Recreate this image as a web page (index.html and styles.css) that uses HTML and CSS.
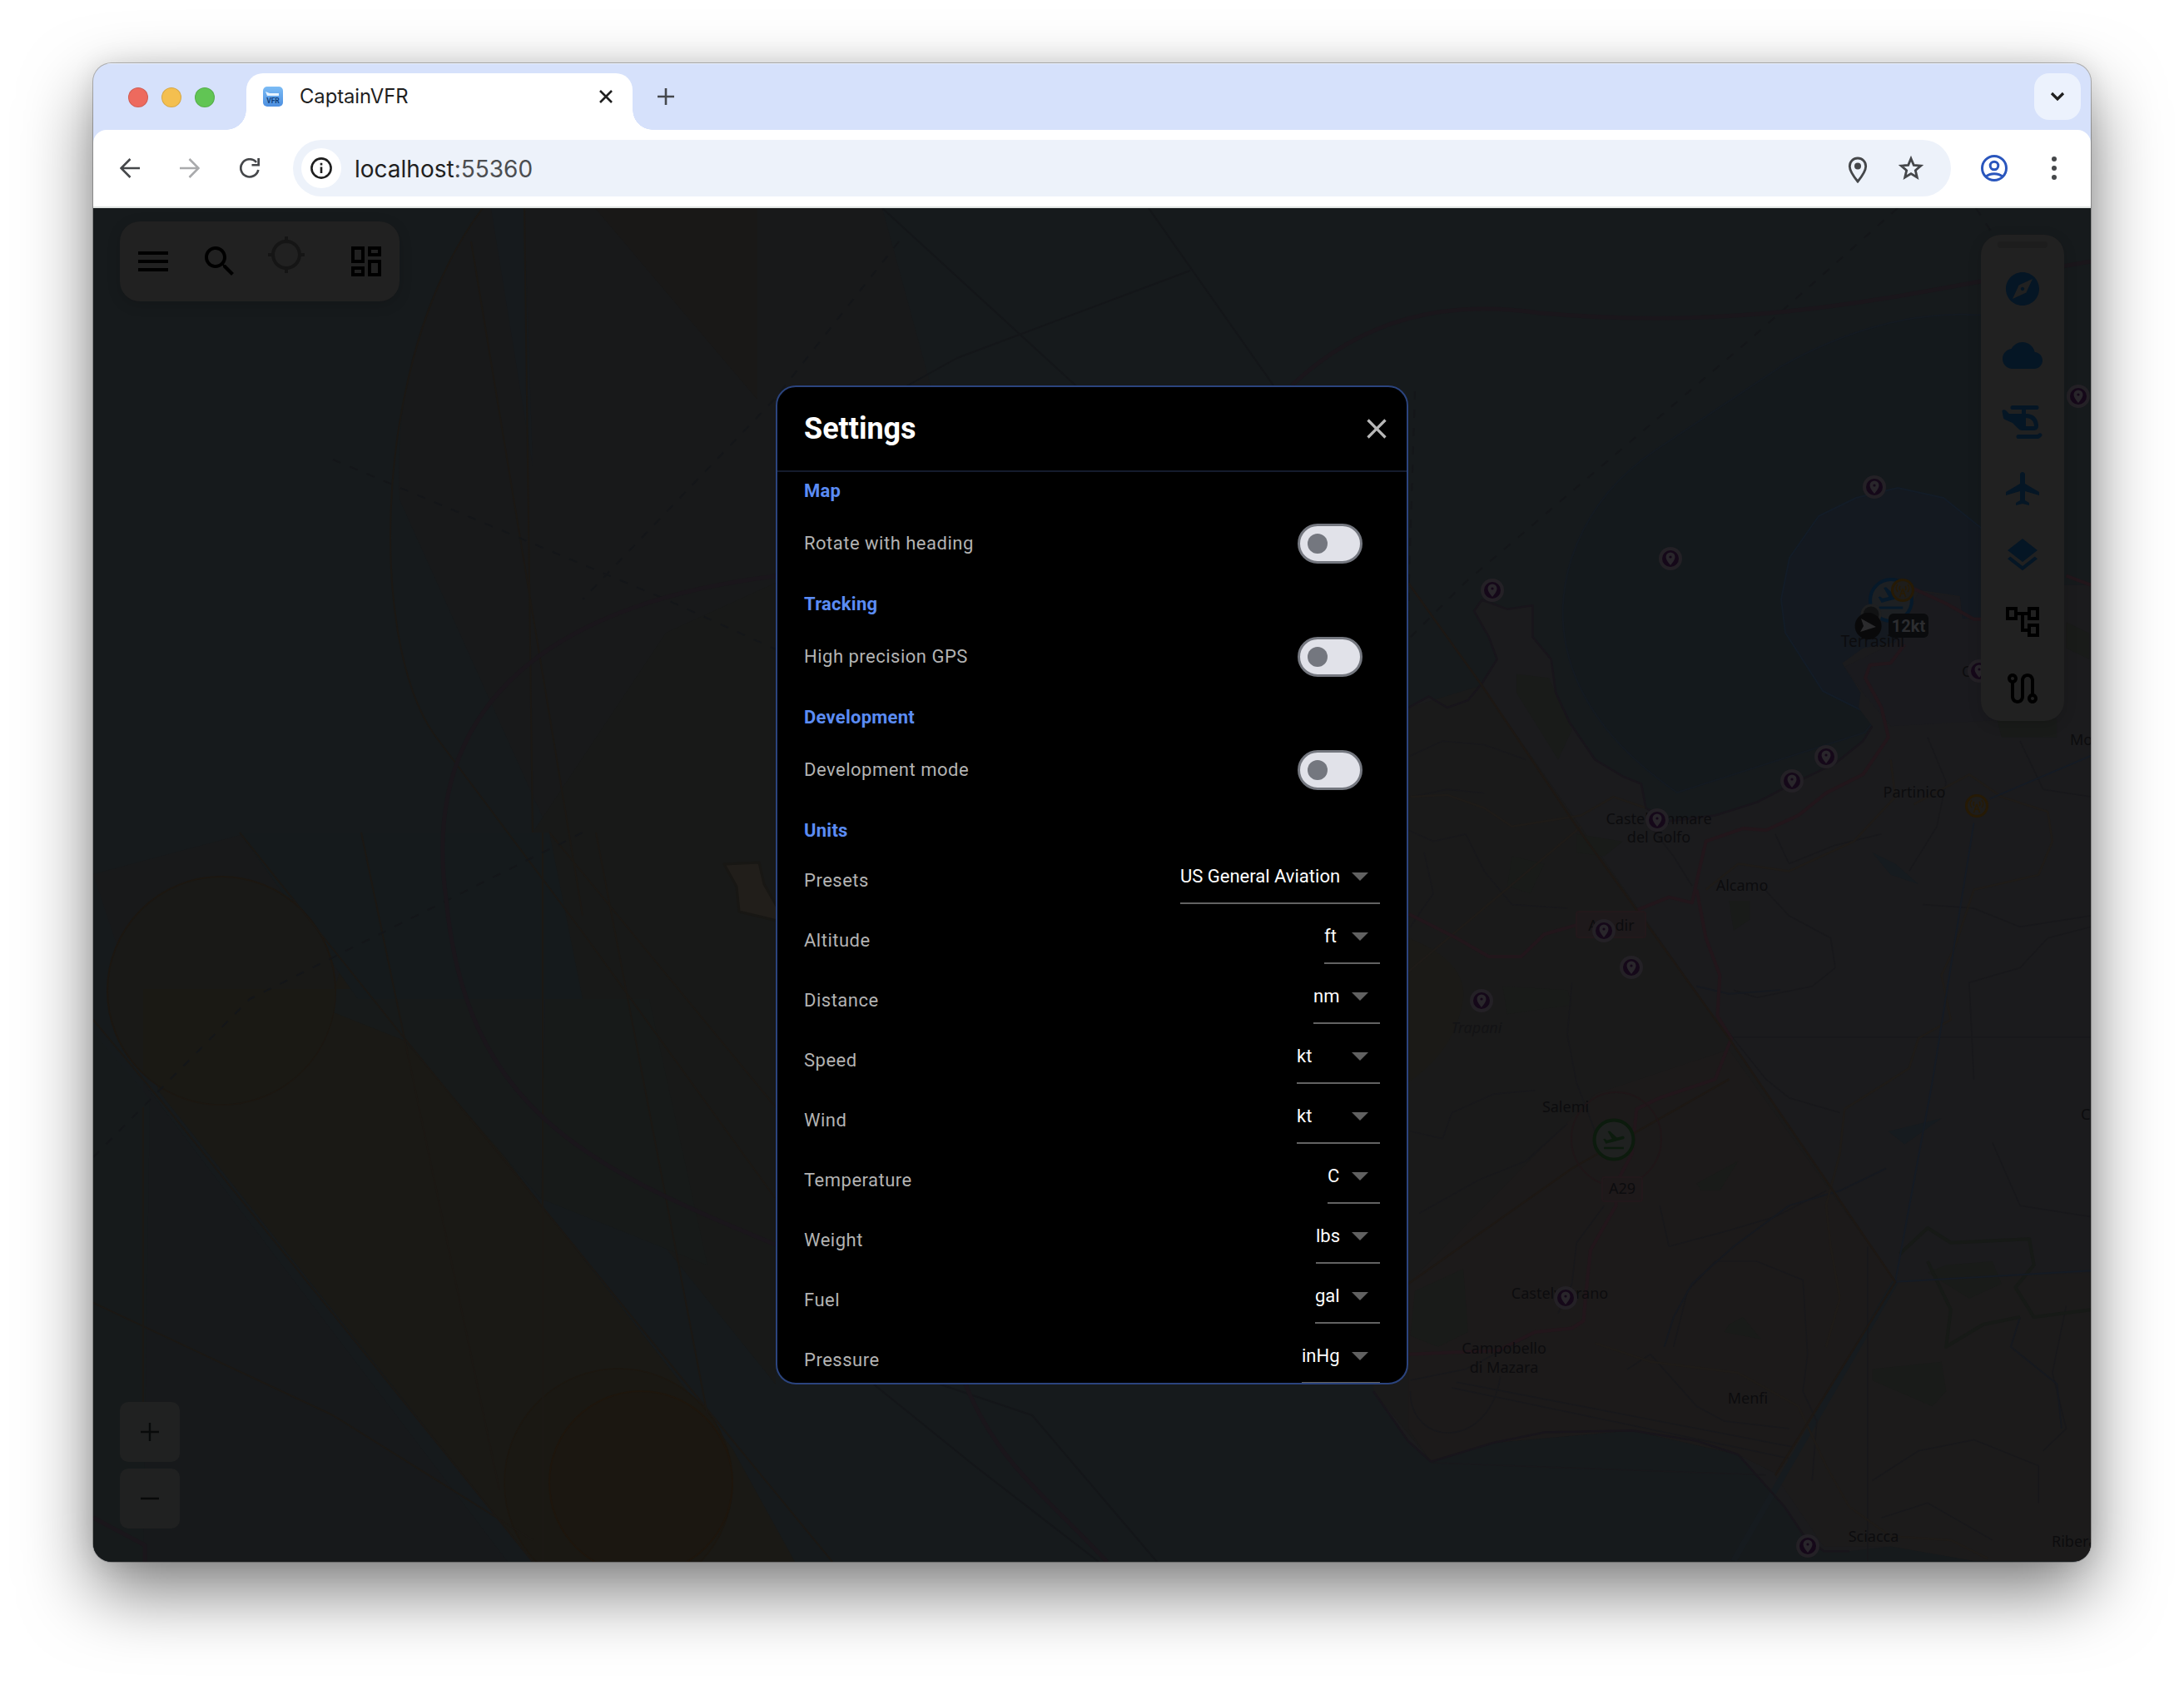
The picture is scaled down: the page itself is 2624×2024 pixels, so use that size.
FILE: index.html
```html
<!DOCTYPE html>
<html lang="en">
<head>
<meta charset="utf-8">
<title>CaptainVFR</title>
<link rel="stylesheet" href="styles.css">
</head>
<body>
<svg class="defs" aria-hidden="true">
  <defs>
    <g id="pin">
      <circle r="14" fill="#242126"/><circle r="10" fill="#150819"/>
      <path d="M0 8C-3.500 3.500-5.500 1-5.500-2a5.500 5.500 0 0 1 11 0C5.500 1 3.500 3.500 0 8z" fill="#29262b"/><circle cy="-2" r="1.600" fill="#150819"/>
    </g>
    <g id="navaid">
      <circle r="12.500" fill="#1e1d1b" stroke="#261a05" stroke-width="3"/>
      <path d="M0-2L-3.500 8M0-2L3.500 8M-2 4H2M-3-5a4 4 0 0 0 0 5M3-5a4 4 0 0 1 0 5M-6-7a7 7 0 0 0 0 9M6-7a7 7 0 0 1 0 9" fill="none" stroke="#281b04" stroke-width="1.400"/>
    </g>
    <path id="takeoff" d="M2.500 19h19v2h-19zm19.570-9.360c-.21-.8-1.040-1.280-1.840-1.060L14.920 10l-6.900-6.430-1.930.51 4.140 7.170-4.970 1.330-1.970-1.540-1.450.39 2.590 4.490s7.120-1.900 16.570-4.430c.81-.23 1.280-1.050 1.070-1.850z"/>
  </defs>
</svg>
<div class="window">
  <div class="tabstrip">
    <div class="lights"><i class="red"></i><i class="amber"></i><i class="green"></i></div>
    <div class="tab">
      <svg class="favicon" viewBox="0 0 24 24"><defs><linearGradient id="fav" x1="0" y1="0" x2="0" y2="1"><stop offset="0" stop-color="#7cbcf5"/><stop offset="1" stop-color="#4d8fe0"/></linearGradient></defs><rect width="24" height="24" rx="5" fill="url(#fav)"/><path d="M3 6l5 2h11v3H5z" fill="#e9f4ff"/><text x="12" y="20" text-anchor="middle" class="favicon-text">VFR</text></svg>
      <span class="tab-title">CaptainVFR</span>
      <svg class="tab-close" viewBox="0 0 16 16"><path d="M1 1L15 15M15 1L1 15" stroke="#1f1f1f" stroke-width="2.600"/></svg>
    </div>
    <svg class="new-tab" viewBox="0 0 20 20"><path d="M10 0V20M0 10H20" stroke="#45484d" stroke-width="2.600"/></svg>
    <div class="tab-search"><svg width="18" height="12" viewBox="0 0 18 12"><path d="M2 2L9 9L16 2" fill="none" stroke="#1f1f1f" stroke-width="3.200"/></svg></div>
  </div>
  <div class="toolbar">
    <svg class="nav" viewBox="0 0 24 24"><path d="M24 12H2M12.500 1L1.500 12L12.500 23" fill="none" stroke="#45474a" stroke-width="2.600"/></svg>
    <svg class="nav" viewBox="0 0 24 24"><path d="M0 12H22M11.500 1L22.500 12L11.500 23" fill="none" stroke="#a9aaac" stroke-width="2.600"/></svg>
    <svg class="nav" viewBox="0 0 24 24"><path d="M22.300 14A10.600 10.600 0 1 1 20 5" fill="none" stroke="#45474a" stroke-width="2.700"/><path d="M24 0V9.500H14.500V7H21.300V0z" fill="#45474a"/></svg>
    <div class="omnibox">
      <div class="site-info"><svg width="26" height="26" viewBox="0 0 26 26"><circle cx="13" cy="13" r="11.600" fill="none" stroke="#1f1f1f" stroke-width="2.600"/><path d="M13 11.500V19M13 6.800V9.400" stroke="#1f1f1f" stroke-width="2.600"/></svg></div>
      <div class="url">localhost<span>:55360</span></div>
      <svg class="omni-icon" viewBox="0 0 32 32"><path d="M16 30C9.500 22 6.300 17 6.300 11.700a9.700 9.700 0 0 1 19.400 0C25.700 17 22.500 22 16 30z" fill="none" stroke="#45474a" stroke-width="2.800"/><circle cx="16" cy="11.500" r="4" fill="#45474a"/></svg>
      <svg class="omni-icon star" viewBox="0 0 32 32"><path d="M16 4.500L19.300 12.400L27.800 13.100L21.300 18.700L23.300 27L16 22.600L8.700 27L10.700 18.700L4.200 13.100L12.700 12.400Z" fill="none" stroke="#45474a" stroke-width="2.800"/></svg>
    </div>
    <svg class="profile" viewBox="0 0 32 32"><g fill="none" stroke="#2a56bd" stroke-width="3"><circle cx="16" cy="16" r="14.500"/><circle cx="16" cy="13" r="4.800"/><path d="M6 26.200C11 21.500 21 21.500 26 26.200"/></g></svg>
    <div class="kebab"><i></i><i></i><i></i></div>
  </div>
  <div class="viewport">
    <svg class="map" viewBox="112 250 2400 1626">
      <rect x="112" y="250" width="2400" height="1626" fill="#161a1c"/>
      <!-- western airspaces -->
      <path d="M360 250H1060L1120 470V1663L870 1320L660 1000L480 600Q470 400 580 250z" fill="#18191a"/>
      <path d="M715 250H910V480z" fill="#191817"/>
      <path d="M590 250H630L640 560z" fill="#161a1d"/>
      <path d="M640 1000L800 760L932 700V1663L720 1400z" fill="#181918"/>
      <path d="M112 1050L300 1000L440 1190L390 1300L760 1800L700 1876H650L172 1230z" fill="#18191a"/>
      <path d="M172 1188H402L416 1140L660 1460L880 1740L955 1876H640L190 1310z" fill="#1a1915"/>
      <path d="M330 1188H650V1440L486 1250z" fill="#171a1a"/>
      <path d="M172 1300L610 1876H172z" fill="#17191b"/>
      <path d="M288 1000H660L700 1200H430z" fill="#151a1c"/>
      <path d="M655 1200H780L850 1520L650 1440z" fill="#171a19"/>
      <path d="M112 1240L180 1320L172 1876H112z" fill="#161a1b"/>
      <circle cx="266" cy="1190" r="137" fill="#191917" stroke="#1c1711" stroke-width="2"/>
      <path d="M172 1188H403A137 137 0 0 1 172 1289z" fill="#1a1914"/>
      <circle cx="743" cy="1781" r="137" fill="#1a1813" stroke="#1c1710" stroke-width="1.500"/>
      <circle cx="770" cy="1781" r="110" fill="#1b1711" stroke="#1e160d" stroke-width="2"/>
      <g fill="none" stroke="#1b1814" stroke-width="2">
        <path d="M288 1000L480 1240L660 1460L880 1730L1000 1876M112 1225L200 1330L640 1876M172 1330V1690M112 1565L400 1700L640 1850"/>
        <path d="M434 1000L600 1790M580 250C450 420 440 760 520 880L700 1120L932 1440M716 1000L850 1700M660 1000L932 1330M652 1000V1876M630 250L640 1000M566 290L700 1100"/>
      </g>
      <g fill="none" stroke="#141619" stroke-width="2">
        <path d="M1060 250L1300 470M1380 250L1530 463M1430 325L1150 430L1060 480"/>
        <path d="M400 552L800 720L932 780M1080 290L930 480L700 720M112 1390L300 1200L700 1000M2280 250L2100 410L1760 700L1690 770M2374 250L2400 290M2100 500L2280 540L2400 575M1700 470L1690 790" stroke-dasharray="10 12"/>
        <path d="M1050 1663L1170 1760L1320 1876M1130 1663L1240 1700L1390 1876"/>
      </g>
      <path d="M932 692C700 720 500 820 536 1080C560 1330 700 1400 932 1495M1160 1663C1200 1760 1260 1800 1330 1876M1552 463C1640 380 1740 360 1850 376C2120 400 2300 350 2512 314M112 1823L174 1856V1876" fill="none" stroke="#1a161b" stroke-width="5"/>
      <path d="M870 1038L912 1036L918 1062L934 1090V1106L888 1095L885 1065z" fill="#211e1a" stroke="#181714" stroke-width="3"/>
      <!-- terminal zones -->
      <path d="M1990 540C1900 600 1860 700 1885 790Q1910 880 2015 952L2240 880L2450 640V390Q2300 350 2140 440z" fill="#14191c" stroke="#141a21" stroke-width="2"/>
      <path d="M2280 586L2335 598L2400 650V860H2250L2190 830L2145 760L2140 720L2150 670L2185 620L2230 598z" fill="#141920" stroke="#131c27" stroke-width="2"/>
      <g transform="translate(1650 600) scale(.555 .4464)">
        <path class="land" d="M0 600L76 560L120 530L160 560L205 540L235 495L268 430L250 370L218 300L235 270L290 295L345 285L345 370L385 430L395 520L425 600L480 700L540 745L580 765L590 830L640 865L740 850L830 815L900 770L1000 710L1060 650L1080 610L1050 560L1055 520L1015 440L1060 400L1130 385L1170 330L1165 240L1270 260L1275 320L1400 330L1450 230L1553 230V2856H1300L1250 2830L1120 2817L1030 2830H975L930 2784L890 2710L830 2626L790 2570L700 2533L560 2505L370 2510L260 2538L125 2589L75 2533L0 2399z"/>
        <path d="M1180 250L1270 262L1275 320L1400 330V590L1120 610L1060 520L1020 450L1130 385z" fill="#1a1a1e"/>
        <path d="M76 560L235 500L770 1450L1130 2105L870 2620L790 2570L560 2505L260 2538L125 2589L0 2399z" fill="#1a1a1a"/>
        <path d="M480 1600L770 1480L1130 2105L870 2620L790 2570L560 2505L260 2538L125 2589L76 2500V2110z" fill="#1c1a1a"/>
        <path d="M1130 2105L1553 2080V2856H1300L1120 2817H975L870 2626z" fill="#1c1b1b"/>
        <path d="M76 1180Q200 1240 195 1340Q180 1480 76 1568z" fill="#1b1a17"/>
        <path d="M780 2856L1130 2105" fill="none" stroke="#161b1f" stroke-width="14"/>
        <path class="wood" d="M310 470L380 480L430 620L400 700L350 600L310 520zM300 960L370 980L340 1060L290 1040zM440 900L540 920L500 960L440 950zM280 1310L420 1320L430 1360L290 1385zM770 1080H815V1130L780 1160zM90 2130L195 2070L205 2240L140 2280L80 2250zM700 1840L790 1780L750 1860L710 1860zM770 2220L800 2200L840 2260L760 2240zM1240 2060L1340 2050L1360 2110L1290 2150L1200 2080zM1080 2340L1230 2320L1240 2400L1210 2440L1080 2370zM1350 590H1480V640H1360zM1500 330L1550 360V430L1500 400z"/>
        <path class="lake" d="M1080 950L1130 980L1180 1035L1120 1010zM1115 1700L1230 1665L1150 1735z"/>
        <path class="minor" d="M80 800L160 780L240 790M80 690L150 650L240 660L330 700M76 890L130 920L200 900L240 1000L300 1090L420 1100M80 1150L130 1060L110 950M600 880L650 960L690 1040M870 900L900 980L1000 930L1100 900M1200 640L1240 760L1220 880L1160 1000M1400 650L1450 780L1553 800M1190 1090L1300 1100L1400 1150L1553 1120M840 1040L900 1120L990 1180L1000 1260L950 1310L830 1340L780 1320M1300 1560L1290 1300L1400 1260L1460 1180L1553 1150M760 1420L850 1560L900 1610L1010 1650M430 1300L420 1440L440 1570L480 1700M80 1700L150 1720L170 1650L260 1600L350 1590M420 1680L330 1780L230 1830L100 1920M500 1900L440 2000L430 2110L400 2190M620 1900L640 2010L760 1970L870 1930L980 1860M650 2280L680 2130L740 2050L830 2050L930 2100L940 2300L930 2400L960 2480L950 2640M1340 1730L1400 1900L1553 1930M1500 2170L1470 2350L1500 2500L1450 2560M1080 2640L1180 2560L1300 2530L1440 2600V2700M1100 2740L1200 2700L1340 2800M80 2370L200 2340L340 2250M550 2340L600 2300L700 2440L760 2480L900 2500"/>
        <path class="river" d="M630 2280L650 2200L690 2110L780 2010L900 1900L1010 1860L1110 1800M1400 2200L1380 2280L1480 2380L1490 2500M700 1310L770 1330L880 1320"/>
        <path class="green" d="M1140 2030L1200 1960L1250 2000L1420 1990L1430 2060L1390 2120L1430 2200L1553 2180M1200 2050L1250 2180L1240 2280L1320 2220L1400 2200"/>
        <path class="minor" d="M170 2390L900 2580M180 2375L910 2550M80 2400C80 2550 250 2560 275 2360M125 2592L850 2625M1070 2010V2856M780 1447H1553"/>
        <path class="road" d="M80 800L160 795L240 830L300 880L450 850L520 800L590 830M720 1050L790 980L900 1000L1040 920L1130 800L1120 700M1170 820L1290 740L1360 800L1460 840L1470 920L1440 1010L1300 1050L1260 1200L1230 1280L1250 1400L1180 1450L1160 1530L1110 1570L1020 1640L1010 1760L980 1900L990 2010L1010 2150L980 2280M480 2270L600 2320L790 2350L920 2440L980 2600L1030 2710L1120 2790L1250 2800L1330 2850M76 1270L450 880"/>
        <path class="motorway" d="M76 1115L180 1180L250 1230L320 1230L370 1170L440 1145M570 1105L640 1070L690 1085L705 1000L720 920L800 885L850 890L920 850L980 790L1060 740L1115 640L1100 560L1065 480L1075 445L1120 440L1150 390M700 1050L720 1180L750 1280L745 1390L775 1450L740 1560L620 1610L570 1640L560 1760L530 1830L525 1900L470 2020L460 2140L455 2210L430 2230L350 2240L270 2290L76 2300M1170 240L1240 280L1300 322H1400M1500 205L1553 230"/>
        <path class="coast" d="M76 560L120 530L160 560L205 540L235 495L268 430L250 370L218 300L235 270L290 295L345 285L345 370L385 430L395 520L425 600L480 700L540 745L580 765L590 830L640 865L740 850L830 815L900 770L1000 710L1060 650L1080 610"/>
        <path class="coast" d="M0 2399L75 2533L125 2589L260 2538L370 2510L560 2505L700 2533L790 2570L830 2626L890 2710L930 2784L975 2830H1030"/>
        <path class="zone-blue" d="M1335 805L1553 690M1300 870L1210 1568L1130 2105L1553 2075"/>
        <path class="zone-brown" d="M76 225L235 500L440 880L770 1450L1130 2105L870 2626M76 2110L430 1800L770 1560"/>
      </g>
      <ellipse cx="1942" cy="1368" rx="54" ry="56" fill="none" stroke="#1f1618" stroke-width="2"/>
      <rect x="1894" y="1095" width="83" height="31" rx="3" fill="#1e191b" stroke="#22181b" stroke-width="2"/>
      <rect x="1925" y="1414" width="48" height="29" rx="3" fill="#1e191a" stroke="#22181b" stroke-width="2"/>
      <g class="places">
        <text x="2300" y="958">Partinico</text><text x="1993" y="990">Castellammare</text><text x="1993" y="1012">del Golfo</text>
        <text x="2093" y="1070">Alcamo</text><text x="1881" y="1336">Salemi</text><text x="1949" y="1434">A29</text>
        <text x="1874" y="1560">Castelvetrano</text><text x="1807" y="1626">Campobello</text><text x="1807" y="1649">di Mazara</text>
        <text x="2100" y="1686">Menfi</text><text x="2251" y="1852">Sciacca</text><text x="2250" y="777" class="town">Terrasini</text>
        <text x="1914" y="1118">A</text><text x="1952" y="1118">dir</text><text x="1774" y="1241" class="soft">Trapani</text>
        <text x="2487" y="895" class="start">Mo</text><text x="2500" y="1345" class="start">C</text><text x="2465" y="1858" class="start">Ribera</text><text x="2357" y="813" class="start">C</text>
      </g>
      <use href="#pin" x="1793" y="709"/><use href="#pin" x="2007" y="671"/><use href="#pin" x="2194" y="909"/><use href="#pin" x="2153" y="938"/><use href="#pin" x="1991" y="985"/><use href="#pin" x="1927" y="1118"/><use href="#pin" x="1960" y="1162"/><use href="#pin" x="1780" y="1202"/><use href="#pin" x="1881" y="1559"/><use href="#pin" x="2172" y="1857"/><use href="#pin" x="2252" y="585"/><use href="#pin" x="2497" y="476"/><use href="#pin" x="2378" y="806"/>
      <use href="#navaid" x="2375" y="968"/>
      <circle cx="2272" cy="721" r="25" fill="#1d2023" stroke="#06192a" stroke-width="4"/>
      <use href="#takeoff" transform="translate(2254 700) scale(1.500)" fill="#06192a"/>
      <use href="#navaid" x="2286" y="709"/>
      <circle cx="2248" cy="738" r="11" fill="#111213" stroke="#1f2021" stroke-width="3"/>
      <circle cx="2244.600" cy="752" r="16" fill="#09090a"/><path d="M2236 743L2254 753L2235 759L2239 752z" fill="#2b2b2d"/>
      <rect x="2269" y="737" width="48" height="29" rx="6" fill="#0a0b0d"/><text x="2293" y="759" class="wind">12kt</text>
      <circle cx="1939" cy="1369" r="23.500" fill="#1f2120" stroke="#0c1b0d" stroke-width="4"/>
      <use href="#takeoff" transform="translate(1924 1354) scale(1.250)" fill="#0c1b0d"/>
    </svg>

    <div class="panel top-panel">
      <svg viewBox="0 0 24 24"><path d="M3 18h18v-2H3v2zm0-5h18v-2H3v2zm0-7v2h18V6H3z"/></svg>
      <svg viewBox="0 0 24 24"><path d="M15.500 14h-.79l-.28-.27C15.410 12.590 16 11.110 16 9.500 16 5.910 13.090 3 9.500 3S3 5.910 3 9.500 5.910 16 9.500 16c1.610 0 3.090-.59 4.230-1.570l.27.28v.79l5 4.990L20.490 19l-4.990-5zm-6 0C7.010 14 5 11.990 5 9.500S7.010 5 9.500 5 14 7.010 14 9.500 11.990 14 9.500 14z"/></svg>
      <svg class="locate" viewBox="0 0 24 24"><path d="M20.940 11c-.46-4.170-3.770-7.480-7.940-7.940V1h-2v2.060C6.830 3.520 3.520 6.830 3.060 11H1v2h2.060c.46 4.170 3.770 7.480 7.940 7.940V23h2v-2.060c4.170-.46 7.480-3.770 7.940-7.940H23v-2h-2.060zM12 19c-3.870 0-7-3.130-7-7s3.130-7 7-7 7 3.130 7 7-3.130 7-7 7z"/></svg>
      <svg class="dash" viewBox="0 0 24 24"><path d="M19 5v2h-4V5h4M9 5v6H5V5h4m10 8v6h-4v-6h4M9 17v2H5v-2h4M21 3h-8v6h8V3zM11 3H3v10h8V3zm10 8h-8v10h8V11zm-10 4H3v6h8v-6z"/></svg>
    </div>

    <div class="panel side-panel">
      <div class="handle"></div>
      <svg class="on" viewBox="0 0 24 24"><path d="M12 10.900c-.61 0-1.100.49-1.100 1.100s.49 1.100 1.100 1.100c.61 0 1.100-.49 1.100-1.100s-.49-1.100-1.100-1.100zM12 2C6.480 2 2 6.480 2 12s4.480 10 10 10 10-4.480 10-10S17.520 2 12 2zm2.190 12.190L6 18l3.810-8.190L18 6l-3.810 8.190z"/></svg>
      <svg class="on" viewBox="0 0 24 24"><path d="M19.350 10.040C18.670 6.590 15.640 4 12 4 9.110 4 6.600 5.640 5.350 8.040 2.340 8.360 0 10.910 0 14c0 3.310 2.690 6 6 6h13c2.760 0 5-2.240 5-5 0-2.640-2.050-4.780-4.650-4.960z"/></svg>
      <svg class="on" viewBox="0 0 48 48"><path d="M12 4H41a2.500 2.500 0 0 1 0 5H28V14C38 14 43 20 43 29a5 5 0 0 1-5 5H24C21 34 20 33 18 31L12 25L3 21C1 20 1 19 .6 17L-.5 11C-.5 9 3 8.500 5 11L8 14H23V9H12a2.500 2.500 0 0 1 0-5zM28 19V29H38C38 23 34 19 28 19zM19 39H42L44 37.500A2.400 2.400 0 0 1 47 41C45 43 44 44 42 44H19a2.500 2.500 0 0 1 0-5z" fill-rule="evenodd"/></svg>
      <svg class="on" viewBox="0 0 24 24"><path d="M22 16v-2l-8.500-5V3.500C13.500 2.670 12.830 2 12 2s-1.500.67-1.500 1.500V9L2 14v2l8.500-2.500V19L8 20.500V22l4-1 4 1v-1.500L13.500 19v-5.500L22 16z"/></svg>
      <svg class="on" viewBox="0 0 24 24"><path d="M11.990 18.540l-7.370-5.730L3 14.070l9 7 9-7-1.630-1.270-7.380 5.740zM12 16l7.360-5.730L21 9l-9-7-9 7 1.630 1.270L12 16z"/></svg>
      <svg viewBox="0 0 24 24"><path d="M22 11V3h-7v3H9V3H2v8h7V8h2v10h4v3h7v-8h-7v3h-2V8h2v3h7zM7 9H4V5h3v4zm10 6h3v4h-3v-4zm0-10h3v4h-3V5z"/></svg>
      <svg viewBox="0 0 24 24"><path d="M19 15.180V7c0-2.210-1.790-4-4-4s-4 1.790-4 4v10c0 1.100-.9 2-2 2s-2-.9-2-2V8.820C8.160 8.400 9 7.300 9 6c0-1.660-1.340-3-3-3S3 4.340 3 6c0 1.300.84 2.400 2 2.820V17c0 2.210 1.790 4 4 4s4-1.790 4-4V7c0-1.100.9-2 2-2s2 .9 2 2v8.180c-1.160.42-2 1.510-2 2.820 0 1.660 1.340 3 3 3s3-1.340 3-3c0-1.300-.84-2.400-2-2.820zM6 7c-.55 0-1-.45-1-1s.45-1 1-1 1 .45 1 1-.45 1-1 1zm12 12c-.55 0-1-.45-1-1s.45-1 1-1 1 .45 1 1-.45 1-1 1z"/></svg>
    </div>

    <div class="zoom-controls">
      <div class="zoom-btn"><svg width="22" height="22" viewBox="0 0 22 22"><path d="M11 0V22M0 11H22" stroke="#080a0a" stroke-width="2.400"/></svg></div>
      <div class="zoom-btn"><svg width="22" height="22" viewBox="0 0 22 22"><path d="M0 11H22" stroke="#080a0a" stroke-width="2.400"/></svg></div>
    </div>

    <div class="dialog">
      <div class="dialog-head">
        <h1>Settings</h1>
        <svg class="dialog-close" viewBox="0 0 24 24"><path d="M19 6.410L17.590 5 12 10.590 6.410 5 5 6.410 10.590 12 5 17.590 6.410 19 12 13.410 17.590 19 19 17.590 13.410 12z"/></svg>
      </div>
      <div class="dialog-body">
        <h2>Map</h2>
        <div class="option"><span>Rotate with heading</span><b class="switch"></b></div>
        <h2>Tracking</h2>
        <div class="option"><span>High precision GPS</span><b class="switch"></b></div>
        <h2>Development</h2>
        <div class="option"><span>Development mode</span><b class="switch"></b></div>
        <h2>Units</h2>
        <div class="unit"><span>Presets</span><div class="select w-preset">US General Aviation</div></div>
        <div class="unit"><span>Altitude</span><div class="select w-ft">ft</div></div>
        <div class="unit"><span>Distance</span><div class="select w-nm">nm</div></div>
        <div class="unit"><span>Speed</span><div class="select w-kt">kt</div></div>
        <div class="unit"><span>Wind</span><div class="select w-kt">kt</div></div>
        <div class="unit"><span>Temperature</span><div class="select w-c">C</div></div>
        <div class="unit"><span>Weight</span><div class="select w-lbs">lbs</div></div>
        <div class="unit"><span>Fuel</span><div class="select w-gal">gal</div></div>
        <div class="unit"><span>Pressure</span><div class="select w-inhg">inHg</div></div>
      </div>
    </div>
  </div>
</div>
</body>
</html>
```
FILE: styles.css
```css
* { box-sizing: border-box; }
body { margin: 0; width: 2624px; height: 2024px; padding: 76px 112px 0; background: #fff; overflow: hidden; font-family: Roboto, sans-serif; }
svg { display: block; flex: none; }
.defs { position: absolute; width: 0; height: 0; }
.window { width: 2400px; height: 1800px; border-radius: 22px; overflow: hidden; background: #d6e1fb; display: flex; flex-direction: column; box-shadow: 0 0 0 1px rgba(0,0,0,.25), 0 36px 84px 0 rgba(0,0,0,.5), 0 0 30px rgba(0,0,0,.1); }

.tabstrip { height: 80px; display: flex; align-items: flex-start; padding: 12px 12px 0 42px; border-top: 1px solid #eaf0fd; flex: none; }
.lights { display: flex; gap: 16px; margin-top: 16px; width: 142px; }
.lights i { width: 24px; height: 24px; border-radius: 50%; border: 1px solid rgba(0,0,0,.12); }
.red { background: #ed6a5e; }
.amber { background: #f4bf4f; }
.green { background: #61c554; }
.tab { position: relative; width: 464px; height: 68px; margin-top: -1px; background: #fff; border-radius: 20px 20px 0 0; display: flex; align-items: flex-start; padding: 16px 24px 0 20px; }
.tab::before, .tab::after { content: ""; position: absolute; bottom: 0; width: 24px; height: 24px; }
.tab::before { left: -24px; background: radial-gradient(circle at 0 0, transparent 23.5px, #fff 24px); }
.tab::after { right: -24px; background: radial-gradient(circle at 100% 0, transparent 23.5px, #fff 24px); }
.favicon { width: 24px; height: 24px; }
.favicon-text { font: 700 8.5px Roboto, sans-serif; fill: #0f3f7c; }
.tab-title { margin-left: 20px; flex: 1; font: 400 23.8px/24px Inter, sans-serif; color: #1f1f1f; letter-spacing: -.05px; }
.tab-close { width: 16px; height: 16px; margin-top: 4px; }
.new-tab { width: 20px; height: 20px; margin: 17px 0 0 30px; }
.tab-search { margin: -1px 0 0 auto; width: 56px; height: 56px; border-radius: 18px; background: #ecf2fd; display: flex; align-items: center; justify-content: center; }

.toolbar { height: 94px; flex: none; background: #fff; border-bottom: 2px solid #dfe3e1; border-radius: 16px 16px 0 0; display: flex; align-items: center; padding: 0 41px 0 32px; }
.nav { width: 24px; height: 24px; margin-right: 48px; }
.omnibox { width: 1992px; height: 68px; margin-left: -8px; border-radius: 34px; background: #edf2fa; display: flex; align-items: center; padding: 0 32px 0 10px; }
.site-info { width: 48px; height: 48px; border-radius: 50%; background: #fff; display: flex; align-items: center; justify-content: center; }
.url { margin: 1px 0 0 16px; flex: 1; font: 400 28px/34px Inter, sans-serif; color: #1f1f1f; }
.url span { color: #4b4d50; }
.omni-icon { width: 32px; height: 32px; margin-top: 3px; }
.star { margin: 0 0 0 32px; }
.profile { width: 32px; height: 32px; margin-left: 36px; }
.kebab { margin-left: auto; display: flex; flex-direction: column; gap: 5px; }
.kebab i { width: 6px; height: 6px; border-radius: 50%; background: #45474a; }

.viewport { flex: 1; position: relative; overflow: hidden; background: #161a1c; }
.map { width: 2400px; height: 1626px; }
.map path { stroke-linejoin: round; }
.land { fill: #1b1b1d; }
.wood { fill: #191b19; }
.lake { fill: #161b1f; }
.minor, .river, .green, .road, .motorway, .coast, .zone-blue, .zone-brown { fill: none; vector-effect: non-scaling-stroke; }
.minor { stroke: #18181b; stroke-width: 1.5px; }
.river { stroke: #16191f; stroke-width: 2px; }
.green { stroke: #171a17; stroke-width: 4px; }
.road { stroke: #1e1b18; stroke-width: 2.5px; }
.motorway { stroke: #22161b; stroke-width: 4px; }
.coast { stroke: #18151b; stroke-width: 2.5px; }
.zone-blue { stroke: #151b24; stroke-width: 2px; }
.zone-brown { stroke: #1d1814; stroke-width: 2.5px; }
.places { font: 18px "Noto Sans", sans-serif; fill: #0c0c0e; text-anchor: middle; }
.places .town { font-size: 19px; }
.places .soft { font-style: italic; fill: #131315; }
.places .start { text-anchor: start; }
.wind { font: 700 20px Roboto, sans-serif; fill: #2c2d30; text-anchor: middle; }

.panel { position: absolute; background: #212121; box-shadow: 0 4px 16px rgba(0,0,0,.15); }
.panel svg { width: 48px; height: 48px; fill: #000; }
.top-panel { left: 32px; top: 16px; width: 336px; height: 96px; border-radius: 24px; display: flex; padding: 24px 16px; gap: 32px; }
.top-panel .locate { fill: #151515; margin-top: -8px; }
.top-panel .dash { margin-left: 16px; }
.side-panel { left: 2268px; top: 32px; width: 100px; height: 584px; border-radius: 24px; display: flex; flex-direction: column; align-items: center; padding-top: 8px; gap: 32px; }
.side-panel .on { fill: #051625; overflow: visible; }
.handle { width: 60px; height: 8px; flex: none; border-radius: 4px; background: #1d1d1d; margin-bottom: -7px; }
.zoom-controls { position: absolute; left: 32px; top: 1434px; display: flex; flex-direction: column; gap: 8px; }
.zoom-btn { width: 72px; height: 72px; border-radius: 10px; background: #202121; display: flex; align-items: center; justify-content: center; }

.dialog { position: absolute; left: 820px; top: 213px; width: 760px; height: 1200px; border: 2px solid #2b447e; border-radius: 24px; background: #000; overflow: hidden; display: flex; flex-direction: column; }
.dialog-head { height: 102px; flex: none; border-bottom: 2px solid #141b2c; display: flex; align-items: center; justify-content: space-between; padding: 0 16px 0 32px; }
.dialog-head h1 { margin: 0; font-size: 36px; font-weight: 700; line-height: 44px; color: #fff; letter-spacing: -.02px; }
.dialog-close { width: 40px; height: 40px; fill: #b8b8b8; }
.dialog-body { padding: 7px 32px 0; }
.dialog-body h2 { margin: 0; height: 32px; font-size: 22px; line-height: 32px; font-weight: 700; letter-spacing: .25px; color: #5b8cf4; }
.option { height: 80px; margin: 7px 0 17px; display: flex; align-items: center; justify-content: space-between; padding-right: 21px; }
.option span, .unit span { font-size: 22px; line-height: 32px; color: #b3b3b3; letter-spacing: .5px; }
.switch { width: 78px; height: 48px; border-radius: 24px; border: 3px solid #74777f; background: #e1e2e9; display: flex; align-items: center; padding-left: 9px; }
.switch::before { content: ""; width: 24px; height: 24px; border-radius: 50%; background: #74777f; }
.unit { height: 72px; display: flex; justify-content: space-between; align-items: flex-start; padding-top: 28px; }
.select { position: relative; height: 50px; margin-top: -6px; border-bottom: 2px solid #626262; color: #fff; font-size: 22px; line-height: 34px; white-space: nowrap; }
.select::after { content: ""; position: absolute; right: 14px; top: 12px; border: 10px solid transparent; border-top-color: #616161; border-bottom: 0; }
.w-preset { width: 240px; }
.w-ft { width: 67px; }
.w-nm { width: 80px; }
.w-kt { width: 100px; }
.w-c { width: 63px; }
.w-lbs { width: 77px; }
.w-gal { width: 78px; }
.w-inhg { width: 94px; }
```
